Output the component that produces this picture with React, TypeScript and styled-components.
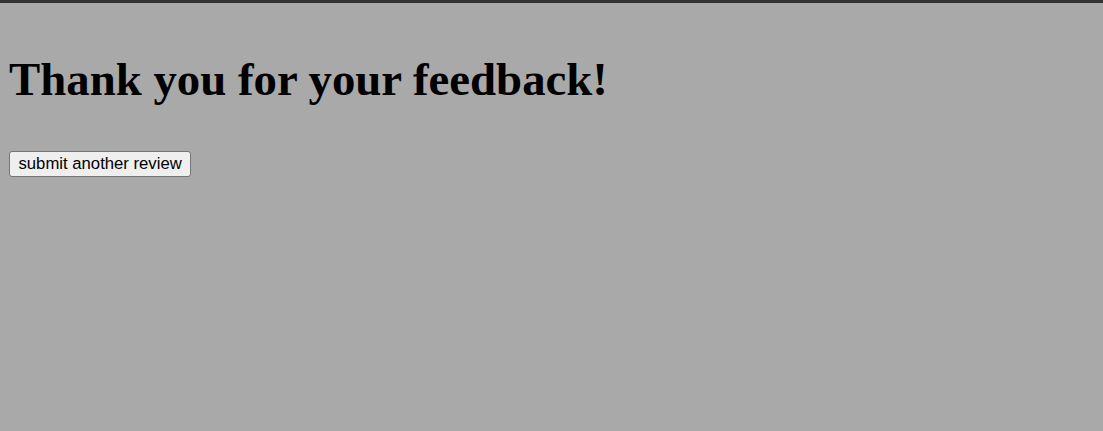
import React from "react";
import styled, { createGlobalStyle } from "styled-components";

const Global = createGlobalStyle`
  html, body { margin: 0; padding: 0; background: #a9a9a9; }
  body { border-top: 3px solid #333333; min-height: 428px; }
`;

const Page = styled.div`
  display: flex;
  flex-direction: column;
  align-items: flex-start;
  padding: 0 9px;
`;

const Title = styled.h1`
  margin: 50px 0 0 0;
  font-family: "Liberation Serif", "Times New Roman", serif;
  font-weight: bold;
  font-size: 46.8px;
  line-height: 53px;
  color: #000;
`;

const Button = styled.button`
  margin-top: 45px;
  font-family: "Liberation Sans", Arial, sans-serif;
  font-size: 16.7px;
  line-height: 19px;
  padding: 2px 8.5px 3px;
  color: #000;
  background: #efefef;
  border: 1px solid #767676;
  border-radius: 3px;
`;

export default function App() {
  return (
    <>
      <Global />
      <Page>
        <Title>Thank you for your feedback!</Title>
        <Button>submit another review</Button>
      </Page>
    </>
  );
}
